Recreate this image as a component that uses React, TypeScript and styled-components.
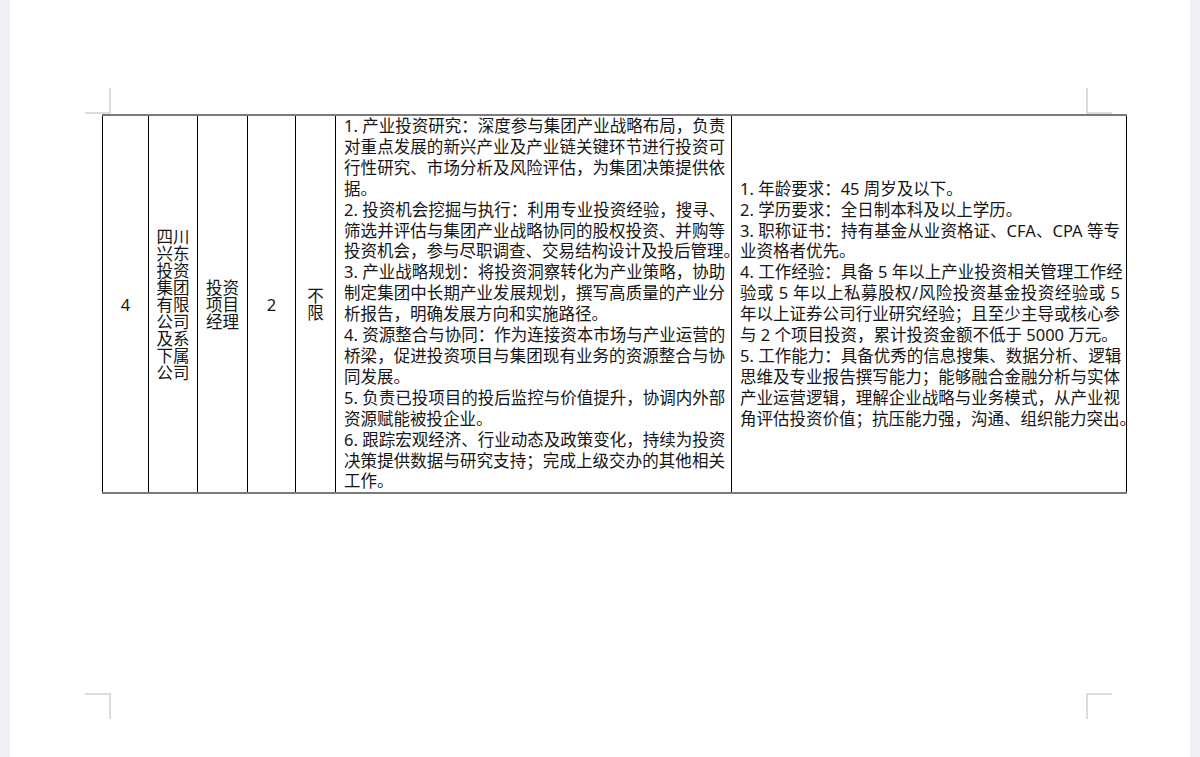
import React from 'react';
import styled, { createGlobalStyle } from 'styled-components';

const GlobalStyle = createGlobalStyle`
  html, body, #root {
    height: 100%;
  }
  body {
    margin: 0;
    overflow: hidden;
    background: #eef0f3;
    font-family: "Noto Sans", "Noto Sans CJK SC", sans-serif;
  }
`;

const Viewport = styled.div`
  display: flex;
  height: 100%;
`;

const Gutter = styled.div`
  width: 10px;
  flex-shrink: 0;
  background: #eef0f3;
`;

const Page = styled.div`
  position: relative;
  flex: 1;
  background: #ffffff;
  padding: 114px 0 0 92px;
  box-sizing: border-box;
`;

type Corner = 'tl' | 'tr' | 'bl' | 'br';

const isLeft = (c: Corner) => c === 'tl' || c === 'bl';
const isTop = (c: Corner) => c === 'tl' || c === 'tr';

const CornerMark = styled.div<{ $corner: Corner }>`
  position: absolute;
  width: 26px;
  height: 26px;
  box-sizing: border-box;
  border: 0 solid #dcdcdc;
  left: ${p => (isLeft(p.$corner) ? '75px' : '1076px')};
  top: ${p => (isTop(p.$corner) ? '88px' : '693px')};
  border-right-width: ${p => (isLeft(p.$corner) ? '2px' : '0')};
  border-left-width: ${p => (isLeft(p.$corner) ? '0' : '2px')};
  border-bottom-width: ${p => (isTop(p.$corner) ? '2px' : '0')};
  border-top-width: ${p => (isTop(p.$corner) ? '0' : '2px')};
`;

const Table = styled.table`
  position: relative;
  border-collapse: collapse;
  table-layout: fixed;
  width: 1024px;
  border-top: 2px solid #7a7a7a;
  border-bottom: 2px solid #7a7a7a;
  color: #161616;
  font-size: 16.5px;
`;

const Cell = styled.td<{ $tight?: boolean }>`
  border: 1px solid #000;
  padding: ${p => (p.$tight ? '0 4px' : '0 6px 0 8px')};
  vertical-align: middle;
  text-align: ${p => (p.$tight ? 'center' : 'left')};
  line-height: ${p => (p.$tight ? '17px' : '20.9px')};
  word-break: break-all;
`;

const Line = styled.div<{ $last?: boolean }>`
  white-space: nowrap;
  text-align: justify;
  text-align-last: ${p => (p.$last ? 'left' : 'justify')};
`;

const duties: string[][] = [
  [
    '1. 产业投资研究：深度参与集团产业战略布局，负责',
    '对重点发展的新兴产业及产业链关键环节进行投资可',
    '行性研究、市场分析及风险评估，为集团决策提供依',
    '据。',
  ],
  [
    '2. 投资机会挖掘与执行：利用专业投资经验，搜寻、',
    '筛选并评估与集团产业战略协同的股权投资、并购等',
    '投资机会，参与尽职调查、交易结构设计及投后管理。',
  ],
  [
    '3. 产业战略规划：将投资洞察转化为产业策略，协助',
    '制定集团中长期产业发展规划，撰写高质量的产业分',
    '析报告，明确发展方向和实施路径。',
  ],
  [
    '4. 资源整合与协同：作为连接资本市场与产业运营的',
    '桥梁，促进投资项目与集团现有业务的资源整合与协',
    '同发展。',
  ],
  [
    '5. 负责已投项目的投后监控与价值提升，协调内外部',
    '资源赋能被投企业。',
  ],
  [
    '6. 跟踪宏观经济、行业动态及政策变化，持续为投资',
    '决策提供数据与研究支持；完成上级交办的其他相关',
    '工作。',
  ],
];

const requirements: string[][] = [
  ['1. 年龄要求：45 周岁及以下。'],
  ['2. 学历要求：全日制本科及以上学历。'],
  [
    '3. 职称证书：持有基金从业资格证、CFA、CPA 等专',
    '业资格者优先。',
  ],
  [
    '4. 工作经验：具备 5 年以上产业投资相关管理工作经',
    '验或 5 年以上私募股权/风险投资基金投资经验或 5',
    '年以上证券公司行业研究经验；且至少主导或核心参',
    '与 2 个项目投资，累计投资金额不低于 5000 万元。',
  ],
  [
    '5. 工作能力：具备优秀的信息搜集、数据分析、逻辑',
    '思维及专业报告撰写能力；能够融合金融分析与实体',
    '产业运营逻辑，理解企业战略与业务模式，从产业视',
    '角评估投资价值；抗压能力强，沟通、组织能力突出。',
  ],
];

const Paragraphs: React.FC<{ items: string[][] }> = ({ items }) => (
  <>
    {items.map((lines, i) =>
      lines.map((text, j) => (
        <Line key={`${i}-${j}`} $last={j === lines.length - 1}>
          {text}
        </Line>
      ))
    )}
  </>
);

const colWidths = [46, 49, 50, 48, 40, 396, 395];

export default function App() {
  return (
    <>
      <GlobalStyle />
      <Viewport>
        <Gutter />
        <Page>
          <CornerMark $corner="tl" />
          <CornerMark $corner="tr" />
          <CornerMark $corner="bl" />
          <CornerMark $corner="br" />
          <Table>
            <colgroup>
              {colWidths.map((w, i) => (
                <col key={i} style={{ width: w }} />
              ))}
            </colgroup>
            <tbody>
              <tr>
                <Cell $tight>4</Cell>
                <Cell $tight>四川兴东投资集团有限公司及系下属公司</Cell>
                <Cell $tight>投资项目经理</Cell>
                <Cell $tight>2</Cell>
                <Cell $tight>不限</Cell>
                <Cell>
                  <Paragraphs items={duties} />
                </Cell>
                <Cell>
                  <Paragraphs items={requirements} />
                </Cell>
              </tr>
            </tbody>
          </Table>
        </Page>
        <Gutter />
      </Viewport>
    </>
  );
}
